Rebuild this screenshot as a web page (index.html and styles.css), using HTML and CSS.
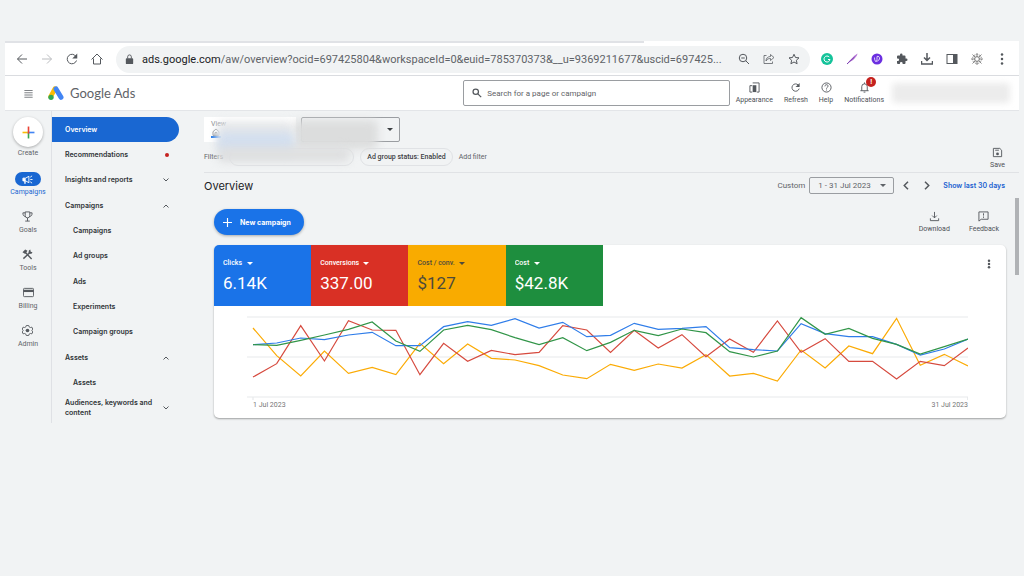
FILE: index.html
```html
<!DOCTYPE html>
<html lang="en">
<head>
    <meta charset="UTF-8">
    <meta name="viewport" content="width=device-width, initial-scale=1.0">
    <title>Overview - Google Ads</title>
    <link rel="stylesheet" href="styles.css">
</head>
<body>
    <div class="window">
        <div class="tab-strip"></div>

        <!-- browser toolbar -->
        <div class="toolbar">
            <button class="tool" aria-label="Back"><svg viewBox="0 0 24 24"><path d="M22 12H3M12 3l-9 9 9 9"/></svg></button>
            <button class="tool faded" aria-label="Forward"><svg viewBox="0 0 24 24"><path d="M2 12h19M12 3l9 9-9 9"/></svg></button>
            <button class="tool" aria-label="Reload"><svg viewBox="0 0 24 24"><path d="M20 7a9.500 9.500 0 1 0 1 8"/><path class="fill" d="M22.500 1v10h-10z"/></svg></button>
            <button class="tool" aria-label="Home"><svg viewBox="0 0 24 24"><path d="M1 13L12 2l11 11M5 11v11h14V11"/></svg></button>
            <div class="omnibox">
                <svg class="lock" viewBox="0 0 24 24"><rect class="fill" x="4" y="9" width="16" height="13" rx="2"/><path d="M8 10V6a4 4 0 0 1 8 0v4"/></svg>
                <label for="url">ads.google.com</label>
                <input type="text" id="url" value="/aw/overview?ocid=697425804&amp;workspaceId=0&amp;euid=785370373&amp;__u=9369211677&amp;uscid=697425...">
                <button class="tool" aria-label="Zoom"><svg viewBox="0 0 24 24"><circle cx="10" cy="10" r="7.500"/><path d="M15.500 15.500L22 22M6.500 10h7"/></svg></button>
                <button class="tool" aria-label="Share"><svg viewBox="0 0 24 24"><path class="thin" d="M7 5H2v16h17v-4M15 3l7 6-7 6v-4c-4 0-7 1-9 5 0-6 4-9 9-9z"/></svg></button>
                <button class="tool" aria-label="Bookmark"><svg viewBox="0 0 24 24"><path d="M12 2.500l3 6.500 7 .7-5.300 4.800 1.500 7L12 18l-6.200 3.500 1.500-7L2 9.700 9 9z"/></svg></button>
            </div>
            <button class="tool" aria-label="Grammar"><svg viewBox="0 0 24 24"><circle cx="12" cy="12" r="12" fill="#15c39a" stroke="none"/><path d="M16.500 8a6 6 0 1 0 1.500 5h-4" stroke="#fff"/></svg></button>
            <button class="tool" aria-label="Feather"><svg viewBox="0 0 24 24"><path d="M2 22C8 14 14 7 23 1c-1 6-8 14-16 17z" fill="#b77bd6" stroke="none"/><path d="M2 22L17 8" stroke="#7a3bb0"/></svg></button>
            <button class="tool" aria-label="Assistant"><svg viewBox="0 0 24 24"><circle cx="12" cy="12" r="11" fill="#6b2fe0" stroke="none"/><path class="thin" d="M7 9c0 9 4 9 5 4V7c3-2 6 2 5 5s-5 5-8 5" stroke="#fff"/></svg></button>
            <button class="tool" aria-label="Extensions"><svg viewBox="0 0 24 24"><path class="fill" d="M20.500 11H19V7a2 2 0 0 0-2-2h-4V3.500a2.500 2.500 0 0 0-5 0V5H4a2 2 0 0 0-2 2v3.800h1.500a2.700 2.700 0 0 1 0 5.400H2V20a2 2 0 0 0 2 2h3.800v-1.500a2.700 2.700 0 0 1 5.400 0V22H17a2 2 0 0 0 2-2v-4h1.500a2.500 2.500 0 0 0 0-5z"/></svg></button>
            <button class="tool" aria-label="Downloads"><svg viewBox="0 0 24 24"><path stroke-width="3" d="M12 0v14M6 9l6 6 6-6M1 16v6h22v-6"/></svg></button>
            <button class="tool" aria-label="Side panel"><svg viewBox="0 0 24 24"><rect x="2" y="3" width="20" height="18"/><path class="fill" d="M14 3h8v18h-8z"/></svg></button>
            <button class="tool" aria-label="Profile"><svg viewBox="0 0 24 24"><circle cx="12" cy="12" r="9" stroke="#888" stroke-dasharray="3 2"/><circle cx="12" cy="12" r="5" stroke="#888"/><path d="M12 0v9M12 15v9M0 12h9M15 12h9M3 3l6 6M15 15l6 6M21 3l-6 6M9 15l-6 6" stroke="#888"/></svg></button>
            <button class="tool" aria-label="Menu"><svg viewBox="0 0 24 24"><g class="fill"><circle cx="12" cy="3" r="2.500"/><circle cx="12" cy="12" r="2.500"/><circle cx="12" cy="21" r="2.500"/></g></svg></button>
        </div>

        <!-- ads header -->
        <header class="app-header">
            <button class="menu-btn" aria-label="Main menu"><svg viewBox="0 0 24 24"><path d="M1 4h22M1 10h22M1 16h22M1 22h22"/></svg></button>
            <a class="brand" href="#">
                <svg viewBox="0 0 48 42"><path d="M21 8L8 32" stroke="#fbbc04" stroke-width="14" stroke-linecap="round"/><path d="M24 9l15 25" stroke="#4285f4" stroke-width="15" stroke-linecap="round"/><circle cx="9" cy="34" r="8" fill="#34a853" stroke="none"/></svg>
                Google Ads
            </a>
            <div class="search">
                <svg viewBox="0 0 24 24"><circle cx="9" cy="9" r="6.500"/><path d="M14 14l8 8"/></svg>
                <input type="text" aria-label="Search" placeholder="Search for a page or campaign">
            </div>
            <div class="header-actions">
                <button class="action"><svg viewBox="0 0 24 24"><path d="M7 8H2v14h5M8 2h14v20h-5"/><path class="fill" d="M8 7h8v15H8z"/></svg>Appearance</button>
                <button class="action"><svg viewBox="0 0 24 24"><path d="M18 6.500a8 8 0 1 0 2 8"/><path class="fill" d="M21 2v9h-9z"/></svg>Refresh</button>
                <button class="action"><svg viewBox="0 0 24 24"><circle cx="12" cy="12" r="10"/><path d="M8.500 9.500c0-5 7-4.500 7-.5 0 2.500-3.500 2.500-3.500 5.500M12 16.500v2"/></svg>Help</button>
                <button class="action"><svg viewBox="0 0 24 24"><path d="M3 19h18M6 19v-9a6 6 0 0 1 12 0v9M12 1v3M10 22h4"/></svg>Notifications<span class="alert">!</span></button>
            </div>
            <div class="account"></div>
        </header>

        <div class="layout">
            <!-- icon rail -->
            <nav class="rail">
                <a class="rail-item rail-create" href="#">
                    <span class="create"><svg viewBox="0 0 24 24"><path d="M1 12h9.500" stroke="#fbbc04"/><path d="M12 23V10.500" stroke="#34a853"/><path d="M23 12H12" stroke="#4285f4"/><path d="M12 1v13" stroke="#ea4335"/></svg></span>
                    Create
                </a>
                <a class="rail-item active" href="#">
                    <span class="pill"><svg viewBox="0 0 24 24"><path d="M2 9h6l7-4v14l-7-4H2z"/><path class="fill" d="M2 9h6v12H5v-6H2z"/><path d="M18 12h5M18 7l4-3M18 17l4 3"/></svg></span>
                    Campaigns
                </a>
                <a class="rail-item" href="#">
                    <svg viewBox="0 0 24 24"><path d="M7 2h10v8a5 5 0 0 1-10 0zM7 4H2c0 5 1 7 5 8M17 4h5c0 5-1 7-5 8M12 15v7M7 22h10"/></svg>
                    Goals
                </a>
                <a class="rail-item" href="#">
                    <svg viewBox="0 0 24 24"><path stroke-width="3" d="M7 7l14 15M3 21L17 8"/><path class="fill" d="M1 7l6-6 5 3-5 7zM15 3l3-2 1 5 4 1-3 4-6-2z"/></svg>
                    Tools
                </a>
                <a class="rail-item" href="#">
                    <svg viewBox="0 0 24 24"><rect x="1" y="3" width="22" height="18" rx="2"/><path class="fill" d="M1 6h22v5H1z"/></svg>
                    Billing
                </a>
                <a class="rail-item" href="#">
                    <svg viewBox="0 0 24 24"><path d="M9.500 1h5l1 3 3 1.500 3-.8 2 4.300-2 3 2 3-2 4.300-3-.8-3 1.500-1 3h-5l-1-3-3-1.500-3 .8-2-4.300 2-3-2-3 2-4.300 3 .8 3-1.500z"/><circle class="fill" cx="12" cy="12" r="4"/></svg>
                    Admin
                </a>
            </nav>

            <!-- page menu -->
            <nav class="side-nav">
                <a class="current" href="#">Overview</a>
                <a href="#">Recommendations <span class="dot"></span></a>
                <a href="#">Insights and reports <svg viewBox="0 0 12 12"><path d="M1 3l5 5 5-5"/></svg></a>
                <a href="#">Campaigns <svg viewBox="0 0 12 12"><path d="M1 9l5-5 5 5"/></svg></a>
                <a class="sub" href="#">Campaigns</a>
                <a class="sub" href="#">Ad groups</a>
                <a class="sub" href="#">Ads</a>
                <a class="sub" href="#">Experiments</a>
                <a class="sub" href="#">Campaign groups</a>
                <a href="#">Assets <svg viewBox="0 0 12 12"><path d="M1 9l5-5 5 5"/></svg></a>
                <a class="sub" href="#">Assets</a>
                <a href="#"><span>Audiences, keywords and content</span> <svg viewBox="0 0 12 12"><path d="M1 3l5 5 5-5"/></svg></a>
            </nav>

            <main>
                <div class="scope">
                    <div class="scope-left">
                        <div class="scope-pickers">
                            <div class="view-box">
                                <span>View</span>
                                <svg viewBox="0 0 24 24"><path d="M3 11l9-8 9 8v11H3zM9 22v-8h6v8"/></svg>
                            </div>
                            <div class="select-box campaign-box">
                                <select aria-label="Campaign"><option></option></select>
                                <span class="caret"></span>
                            </div>
                        </div>
                        <div class="filters">
                            <span class="filters-label">Filters</span>
                            <button class="chip chip-hidden" aria-label="Campaign status"></button>
                            <button class="chip">Ad group status: Enabled</button>
                            <button class="add-filter">Add filter</button>
                        </div>
                        <div class="smudge smudge-view"></div>
                        <div class="smudge smudge-names"></div>
                        <div class="smudge smudge-blue"></div>
                        <div class="smudge smudge-filter"></div>
                    </div>
                    <button class="action save"><svg viewBox="0 0 24 24"><path d="M3 3h14l4 4v14H3z"/><path d="M7 7h8"/><circle class="fill" cx="12" cy="15" r="3"/></svg>Save</button>
                </div>

                <div class="title-row">
                    <h1>Overview</h1>
                    <label for="range">Custom</label>
                    <div class="select-box range-box">
                        <select id="range"><option>1 - 31 Jul 2023</option></select>
                        <span class="caret"></span>
                    </div>
                    <button class="step" aria-label="Previous period"><svg viewBox="0 0 12 12"><path d="M8 1L3 6l5 5"/></svg></button>
                    <button class="step" aria-label="Next period"><svg viewBox="0 0 12 12"><path d="M4 1l5 5-5 5"/></svg></button>
                    <a href="#">Show last 30 days</a>
                </div>

                <div class="content">
                    <div class="panel">
                        <div class="panel-top">
                            <button class="new-btn"><svg viewBox="0 0 12 12"><path d="M6 0v12M0 6h12"/></svg>New campaign</button>
                            <div class="panel-actions">
                                <button class="action"><svg viewBox="0 0 24 24"><path d="M12 2v13M7 10l5 5 5-5M3 16v5h18v-5"/></svg>Download</button>
                                <button class="action"><svg viewBox="0 0 24 24"><path d="M2 2h20v16H7l-5 4zM12 5v5M12 12v3"/></svg>Feedback</button>
                            </div>
                        </div>

                        <section class="card">
                            <div class="metrics">
                                <div class="metric blue">
                                    <div class="metric-name"><select aria-label="Metric 1"><option>Clicks</option></select><span class="caret"></span></div>
                                    <div class="value">6.14K</div>
                                </div>
                                <div class="metric red">
                                    <div class="metric-name"><select aria-label="Metric 2"><option>Conversions</option></select><span class="caret"></span></div>
                                    <div class="value">337.00</div>
                                </div>
                                <div class="metric yellow">
                                    <div class="metric-name"><select aria-label="Metric 3"><option>Cost / conv.</option></select><span class="caret"></span></div>
                                    <div class="value">$127</div>
                                </div>
                                <div class="metric green">
                                    <div class="metric-name"><select aria-label="Metric 4"><option>Cost</option></select><span class="caret"></span></div>
                                    <div class="value">$42.8K</div>
                                </div>
                                <button class="more" aria-label="More options"><svg viewBox="0 0 24 24"><g class="fill"><circle cx="12" cy="4" r="3"/><circle cx="12" cy="12" r="3"/><circle cx="12" cy="20" r="3"/></g></svg></button>
                            </div>
                            <div class="chart">
                                <svg id="chart" viewBox="0 0 2160 252" preserveAspectRatio="none">
                                    <path class="grid" d="M0 3H2160M0 123H2160M0 243H2160M18 243v9M2159 243v9"/>
                                </svg>
                                <div class="axis"><span>1 Jul 2023</span><span>31 Jul 2023</span></div>
                            </div>
                        </section>
                    </div>
                    <div class="scrollbar"></div>
                </div>
            </main>
        </div>
    </div>

    <script src="script.js"></script>
</body>
</html>
```
FILE: styles.css
```css
* {
    box-sizing: border-box;
}
body {
    margin: 0;
    background-color: #f1f3f4;
    font-family: Roboto, sans-serif;
    font-size: 7px;
    color: #3c4043;
}
button, input, select {
    font: inherit;
    color: inherit;
    border: none;
    background: none;
    padding: 0;
    margin: 0;
    outline: none;
}
button {
    cursor: pointer;
}
select {
    appearance: none;
    cursor: pointer;
}
a {
    color: inherit;
    text-decoration: none;
}
svg {
    display: block;
    flex: none;
    fill: none;
    stroke: #54585d;
    stroke-width: 2;
}
.fill {
    fill: #54585d;
    stroke: none;
}
.thin {
    stroke-width: 1.5;
}
.window {
    margin: 41px 5px 0;
}
.tab-strip {
    height: 2px;
    background: linear-gradient(to right, #e0e2e6 63%, #fff 63%);
}

/* browser toolbar */
.toolbar {
    display: flex;
    align-items: center;
    gap: 9px;
    height: 33px;
    padding: 0 9px;
    background-color: #fff;
    border-bottom: 1px solid #dadce0;
}
.tool {
    display: flex;
    justify-content: center;
    flex: none;
    width: 16px;
}
.tool svg {
    width: 12px;
    height: 12px;
}
.faded svg {
    stroke: #bbbdc0;
}
.omnibox {
    flex: 1;
    display: flex;
    align-items: center;
    min-width: 0;
    height: 27px;
    margin-left: 2px;
    padding: 0 8px;
    background-color: #f1f3f4;
    border-radius: 14px;
    font-size: 11px;
    color: #5f6368;
}
.omnibox .lock {
    width: 11px;
    height: 11px;
    margin-right: 7px;
}
.omnibox label {
    color: #202124;
}
.omnibox input {
    flex: 1;
    min-width: 0;
    text-overflow: ellipsis;
}
.omnibox .tool {
    margin-left: 9px;
}

/* ads header */
.app-header {
    display: flex;
    align-items: center;
    height: 35px;
    padding: 0 9px 0 18px;
    background-color: #fff;
    border-bottom: 1px solid #e3e5e8;
}
.menu-btn svg {
    width: 11px;
    height: 9px;
}
.brand {
    display: flex;
    align-items: center;
    gap: 6px;
    margin-left: 14px;
    font-family: Lato, sans-serif;
    font-size: 13px;
    color: #5f6368;
}
.brand svg {
    width: 16px;
    height: 14px;
}
.search {
    display: flex;
    align-items: center;
    gap: 5px;
    width: 27%;
    height: 26px;
    margin-left: auto;
    padding: 0 8px;
    border: 1px solid #9a9da1;
    border-radius: 2px;
    font-size: 8px;
}
.search svg {
    width: 10px;
    height: 10px;
    stroke-width: 3;
}
.search input {
    flex: 1;
}
.search input::placeholder {
    color: #5f6368;
}
.header-actions {
    display: flex;
    gap: 11px;
    margin: 0 8px 0 6px;
}
.action {
    position: relative;
    display: flex;
    flex-direction: column;
    align-items: center;
    gap: 3px;
    line-height: 8px;
    color: #4d5156;
}
.action svg {
    width: 11px;
    height: 11px;
}
.alert {
    position: absolute;
    left: 55%;
    top: -5px;
    width: 10px;
    height: 10px;
    border-radius: 50%;
    background-color: #c5221f;
    color: #fff;
    font-weight: bold;
    line-height: 10px;
    text-align: center;
}
.account {
    width: 118px;
    height: 20px;
    border-radius: 4px;
    background-color: #ececec;
    filter: blur(3px);
}

/* left side */
.layout {
    display: flex;
    align-items: flex-start;
}
.rail {
    display: flex;
    flex-direction: column;
    align-items: center;
    gap: 15px;
    flex: none;
    width: 47px;
    height: 312px;
    padding-top: 6px;
    border-right: 1px solid #dfe1e5;
}
.rail-item {
    display: flex;
    flex-direction: column;
    align-items: center;
    gap: 4px;
    line-height: 8px;
    color: #5f6368;
}
.rail-item svg {
    width: 11px;
    height: 11px;
}
.rail-create {
    gap: 2px;
}
.create {
    display: grid;
    place-items: center;
    width: 30px;
    height: 30px;
    border-radius: 50%;
    background-color: #fff;
    box-shadow: 0 1px 3px rgba(0, 0, 0, 0.3);
}
.create svg {
    width: 13px;
    height: 13px;
    stroke-width: 3;
}
.rail-item.active {
    gap: 2px;
    color: #1967d2;
}
.pill {
    display: grid;
    place-items: center;
    width: 26px;
    height: 14px;
    border-radius: 7px;
    background-color: #1967d2;
}
.pill svg {
    stroke: #fff;
}
.pill .fill {
    fill: #fff;
}
.side-nav {
    display: flex;
    flex-direction: column;
    justify-content: space-between;
    flex: none;
    width: 127px;
    height: 310px;
    padding-top: 6px;
    font-family: Inter, sans-serif;
    font-size: 7px;
    font-weight: 600;
    line-height: 10px;
    color: #303337;
}
.side-nav a {
    display: flex;
    align-items: center;
    justify-content: space-between;
    min-height: 25px;
    padding: 0 10px 0 13px;
}
.side-nav .current {
    color: #fff;
    background-color: #1967d2;
    border-radius: 0 13px 13px 0;
}
.side-nav .sub {
    padding-left: 21px;
}
.side-nav svg {
    width: 6px;
    height: 6px;
}
.dot {
    width: 4px;
    height: 4px;
    border-radius: 50%;
    background-color: #c5221f;
}

/* scope and filters */
main {
    flex: 1;
    min-width: 0;
    padding-left: 25px;
}
.scope {
    display: flex;
    justify-content: space-between;
    align-items: flex-end;
    padding: 6px 14px 3px 0;
    border-bottom: 1px solid #e0e2e5;
}
.scope-left {
    position: relative;
    padding-bottom: 3px;
}
.scope-pickers {
    display: flex;
    gap: 5px;
}
.view-box {
    width: 92px;
    height: 25px;
    padding: 3px 7px;
    background-color: #fff;
    color: #80868b;
}
.view-box svg {
    width: 10px;
    height: 10px;
    border-bottom: 2px solid #1a73e8;
}
.select-box {
    display: flex;
    align-items: center;
    border: 1px solid #9a9da1;
    border-radius: 2px;
}
.select-box select {
    flex: 1;
    align-self: stretch;
}
.caret {
    width: 0;
    border: 3px solid transparent;
    border-top-color: currentColor;
    border-bottom: none;
}
.campaign-box {
    width: 99px;
    height: 25px;
    padding-right: 6px;
}
.filters {
    display: flex;
    align-items: center;
    gap: 6px;
    margin-top: 6px;
    color: #5f6368;
}
.chip {
    height: 18px;
    padding: 0 6px;
    border: 1px solid #e0e2e5;
    border-radius: 9px;
    color: #3c4043;
    font-weight: 500;
}
.chip-hidden {
    width: 125px;
}
.smudge {
    position: absolute;
    border-radius: 6px;
    filter: blur(4px);
}
.smudge-view {
    left: 13px;
    top: 4px;
    width: 76px;
    height: 34px;
    background-color: #e6e8ea;
}
.smudge-names {
    left: 90px;
    top: 3px;
    width: 84px;
    height: 29px;
    background-color: #dcdddd;
}
.smudge-blue {
    left: 14px;
    top: 15px;
    width: 76px;
    height: 21px;
    background-color: #d3dfef;
}
.smudge-filter {
    left: 14px;
    top: 30px;
    width: 132px;
    height: 15px;
    background-color: #dedfe0;
}

/* title and dates */
.title-row {
    display: flex;
    align-items: center;
    gap: 4px;
    height: 25px;
    padding-right: 14px;
    color: #5f6368;
    font-size: 8px;
}
h1 {
    flex: 1;
    margin: 0;
    font-family: Inter, sans-serif;
    font-size: 11px;
    font-weight: normal;
    color: #202124;
}
.range-box {
    width: 85px;
    height: 17px;
    padding: 0 7px 0 8px;
}
.step {
    width: 16px;
}
.step svg {
    width: 9px;
    height: 9px;
    margin: 0 auto;
}
.title-row a {
    margin-left: 5px;
    font-family: Inter, sans-serif;
    font-size: 7px;
    font-weight: 600;
    color: #1a5fd0;
}

/* overview card */
.content {
    display: flex;
    align-items: flex-start;
}
.panel {
    flex: 1;
    min-width: 0;
    padding: 11px 9px 0 10px;
}
.panel-top {
    display: flex;
    justify-content: space-between;
    align-items: center;
}
.new-btn {
    display: flex;
    align-items: center;
    gap: 8px;
    height: 26px;
    padding: 0 13px 0 9px;
    border-radius: 13px;
    background-color: #1a73e8;
    box-shadow: 0 1px 3px rgba(0, 0, 0, 0.3);
    color: #fff;
    font-family: Inter, sans-serif;
    font-weight: 700;
}
.new-btn svg {
    width: 9px;
    height: 9px;
    stroke: #fff;
    stroke-width: 1.5;
}
.panel-actions {
    display: flex;
    gap: 19px;
    padding-right: 7px;
}
.card {
    margin-top: 10px;
    border-radius: 5px;
    background-color: #fff;
    box-shadow: 0 1px 2px rgba(0, 0, 0, 0.35);
    overflow: hidden;
}
.metrics {
    display: grid;
    grid-template-columns: repeat(4, 97fr) 402fr;
    align-items: start;
}
.metric {
    height: 61px;
    padding: 13px 8px 0 9px;
    color: #fff;
}
.metric-name {
    display: flex;
    align-items: center;
    gap: 4px;
    line-height: 10px;
    font-weight: 500;
}
.value {
    margin-top: 5px;
    font-size: 17px;
    line-height: 20px;
}
.blue {
    background-color: #1a73e8;
}
.red {
    background-color: #d93025;
}
.yellow {
    background-color: #f9ab00;
    color: #4d4a3c;
}
.green {
    background-color: #1e8e3e;
}
.more {
    justify-self: end;
    margin: 14px 12px 0 0;
}
.more svg {
    width: 10px;
    height: 10px;
}
.chart {
    padding: 10px 38px 8px 33px;
}
.chart svg {
    width: 100%;
    height: 84px;
}
.chart polyline, .chart path {
    vector-effect: non-scaling-stroke;
    stroke-width: 1.2;
}
.chart .grid {
    stroke: #e8eaec;
}
.axis {
    display: flex;
    justify-content: space-between;
    padding-left: 6px;
    line-height: 10px;
    color: #757575;
}
.scrollbar {
    flex: none;
    width: 4px;
    height: 77px;
    background-color: #b0b2b5;
}
```
FILE: script.js
```js
// daily values, 1 - 31 July, as distance from the top of the plot
const series = {
    '#fbab05': [36, 119, 180, 105, 172, 154, 176, 82, 143, 84, 127, 132, 149, 177, 188, 145, 163, 144, 156, 116, 180, 172, 195, 102, 156, 90, 113, 7, 148, 115, 150],
    '#d64a3e': [183, 143, 29, 135, 14, 42, 43, 176, 82, 136, 103, 116, 109, 29, 42, 109, 43, 96, 56, 122, 69, 109, 15, 109, 68, 136, 136, 189, 136, 149, 96],
    '#2f7de9': [86, 81, 66, 71, 57, 49, 89, 89, 32, 17, 28, 8, 36, 19, 62, 58, 22, 40, 37, 32, 95, 101, 105, 23, 53, 62, 62, 85, 117, 99, 69],
    '#319548': [86, 88, 73, 57, 40, 18, 75, 106, 42, 28, 41, 65, 86, 65, 104, 79, 43, 59, 39, 50, 107, 123, 105, 5, 55, 37, 67, 85, 114, 92, 69]
};

const chart = document.getElementById('chart');
for (const color in series) {
    const line = document.createElementNS('http://www.w3.org/2000/svg', 'polyline');
    const points = series[color].map((y, day) => `${Math.round(18 + day * 71.4)},${y}`);
    line.setAttribute('points', points.join(' '));
    line.setAttribute('stroke', color);
    chart.appendChild(line);
}
```
